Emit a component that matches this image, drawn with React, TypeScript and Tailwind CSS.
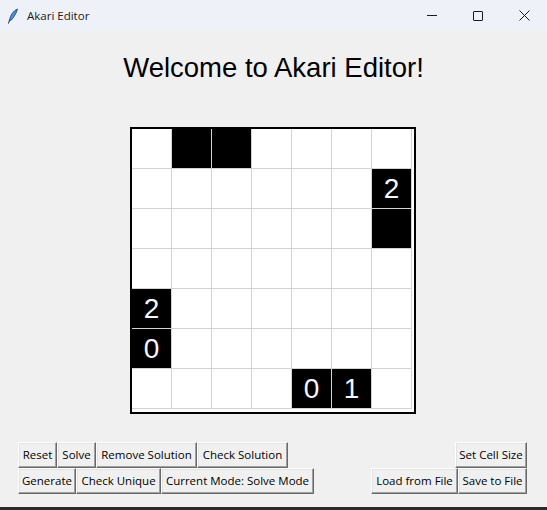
import React from "react";

const BLACK: Record<string, string> = {
  "0,1": "",
  "0,2": "",
  "1,6": "2",
  "2,6": "",
  "4,0": "2",
  "5,0": "0",
  "6,4": "0",
  "6,5": "1",
};

function Btn({ label, w }: { label: string; w: number }) {
  return (
    <div
      style={{ width: w }}
      className="h-[26px] flex items-center justify-center bg-[#f0f0f0] border border-t-white border-l-white border-r-[#696969] border-b-[#696969] shadow-[inset_-1px_-1px_0_#a0a0a0,inset_1px_1px_0_#e3e3e3] text-[11.5px] text-black whitespace-nowrap [font-family:'Open_Sans',sans-serif]"
    >
      {label}
    </div>
  );
}

export default function App() {
  const cells = [];
  for (let r = 0; r < 7; r++) {
    for (let c = 0; c < 7; c++) {
      const key = `${r},${c}`;
      const isBlack = key in BLACK;
      cells.push(
        <div
          key={key}
          className={`w-[40px] h-[40px] border-r border-b border-[#d3d3d3] flex items-center justify-center ${
            isBlack ? "bg-black" : "bg-white"
          }`}
        >
          {isBlack && BLACK[key] ? (
            <span className="text-[#f4f6ff] text-[28px] leading-none [font-family:'Liberation_Sans',Arial,sans-serif]">
              {BLACK[key]}
            </span>
          ) : null}
        </div>
      );
    }
  }

  return (
    <div className="w-[547px] h-[510px] overflow-hidden bg-[#f0f0f0] flex flex-col">
      {/* Title bar */}
      <div className="h-[31px] bg-[#eef1f7] flex items-center shrink-0">
        <svg width="12" height="16" viewBox="0 0 12 16" className="ml-[7px]">
          <path d="M10.5 1 C 6 3, 3.5 7, 2.5 12 L 4 12.5 C 7 9, 9.5 5, 10.5 1 Z" fill="#4a8fe0" stroke="#1f3f6e" strokeWidth="0.8" />
          <path d="M2.5 12 L 1.5 15.5" stroke="#222" strokeWidth="1" />
        </svg>
        <span className="ml-[8px] text-[11.5px] text-[#1a1a1a] [font-family:'Open_Sans',sans-serif]">Akari Editor</span>
        <div className="ml-auto flex items-center">
          <div className="w-[46px] h-[31px] flex items-center justify-center">
            <div className="w-[10px] h-[1px] bg-[#1a1a1a]" />
          </div>
          <div className="w-[46px] h-[31px] flex items-center justify-center">
            <div className="w-[10px] h-[10px] border border-[#1a1a1a] rounded-[1px]" />
          </div>
          <div className="w-[46px] h-[31px] flex items-center justify-center">
            <svg width="11" height="11" viewBox="0 0 11 11">
              <path d="M0.5 0.5 L10.5 10.5 M10.5 0.5 L0.5 10.5" stroke="#1a1a1a" strokeWidth="1" />
            </svg>
          </div>
        </div>
      </div>

      {/* Main */}
      <div className="h-[476px] flex flex-col shrink-0">
        <div className="mt-[22px] h-[30px] text-center text-[27.5px] leading-[30px] text-black [font-family:'Liberation_Sans',Arial,sans-serif]">
          Welcome to Akari Editor!
        </div>

        <div className="mt-[44px] ml-[130px] w-[286px] h-[287px] border-2 border-black bg-white">
          <div className="grid grid-cols-[repeat(7,40px)]">{cells}</div>
        </div>

        <div className="mt-[28px] flex justify-between pl-[18px] pr-[20px]">
          <div className="flex flex-col">
            <div className="flex">
              <Btn label="Reset" w={39} />
              <Btn label="Solve" w={39} />
              <Btn label="Remove Solution" w={101} />
              <Btn label="Check Solution" w={91} />
            </div>
            <div className="flex">
              <Btn label="Generate" w={58} />
              <Btn label="Check Unique" w={85} />
              <Btn label="Current Mode: Solve Mode" w={153} />
            </div>
          </div>
          <div className="flex flex-col items-end">
            <Btn label="Set Cell Size" w={72} />
            <div className="flex">
              <Btn label="Load from File" w={87} />
              <Btn label="Save to File" w={69} />
            </div>
          </div>
        </div>
      </div>
      <div className="h-[3px] bg-[#2a2a2a] shrink-0" />
    </div>
  );
}
